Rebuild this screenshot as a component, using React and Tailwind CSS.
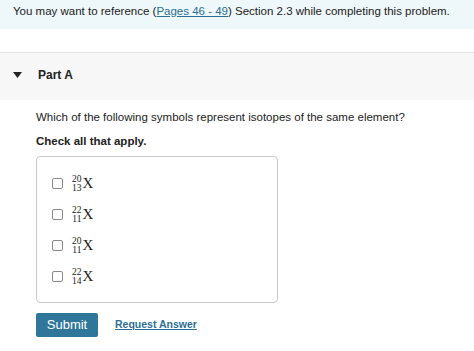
import React from "react";

const OPTIONS = [
  { a: 20, z: 13 },
  { a: 22, z: 11 },
  { a: 20, z: 11 },
  { a: 22, z: 14 },
];

function Isotope({ a, z }) {
  return (
    <span className="flex items-center font-['Liberation_Serif',serif] text-[#222]">
      <span className="flex flex-col items-end text-[9.5px] leading-[9px]">
        <span>{a}</span>
        <span>{z}</span>
      </span>
      <span className="text-[15px] leading-none ml-[1px]">X</span>
    </span>
  );
}

export default function App() {
  return (
    <div className="w-[474px] h-[351px] bg-white font-['Liberation_Sans',Arial,sans-serif] text-[#222] overflow-hidden">
      <div className="h-[29px] bg-[#eef7f9] pl-[13px] pt-[4px] text-[11.5px] leading-[15px]">
        You may want to reference (
        <a href="#" className="text-[#2c6f97] underline">Pages 46 - 49</a>
        ) Section 2.3 while completing this problem.
      </div>

      <div className="h-[23px]" />

      <div className="h-[48px] bg-[#f7f7f7] border-t border-[#e4e4e4] flex items-center">
        <svg width="9" height="6" viewBox="0 0 9 6" className="ml-[13px] mt-[-3px]">
          <path d="M0 0 H9 L4.5 6 Z" fill="#222" />
        </svg>
        <span className="ml-[16px] mt-[-4px] text-[12px] font-bold">Part A</span>
      </div>

      <div className="pl-[36px] pt-[10px]">
        <div className="text-[11.5px] leading-[15px]">
          Which of the following symbols represent isotopes of the same element?
        </div>
        <div className="mt-[9px] text-[11.5px] leading-[15px] font-bold">Check all that apply.</div>

        <div className="mt-[7px] w-[242px] h-[147px] border border-[#c8c8c8] rounded-[4px] pt-[17px] pl-[15px] flex flex-col gap-[12px]">
          {OPTIONS.map((o, i) => (
            <label key={i} className="flex items-center h-[19px]">
              <span className="w-[11px] h-[11px] border border-[#8a8a8a] rounded-[2px] bg-white" />
              <span className="ml-[9px]">
                <Isotope a={o.a} z={o.z} />
              </span>
            </label>
          ))}
        </div>

        <div className="mt-[10px] flex items-center">
          <button className="w-[62px] h-[24px] bg-[#30769b] text-white text-[13px] rounded-[2px]">
            Submit
          </button>
          <a href="#" className="ml-[17px] text-[10.5px] font-bold text-[#2c6f97] underline">
            Request Answer
          </a>
        </div>
      </div>
    </div>
  );
}
